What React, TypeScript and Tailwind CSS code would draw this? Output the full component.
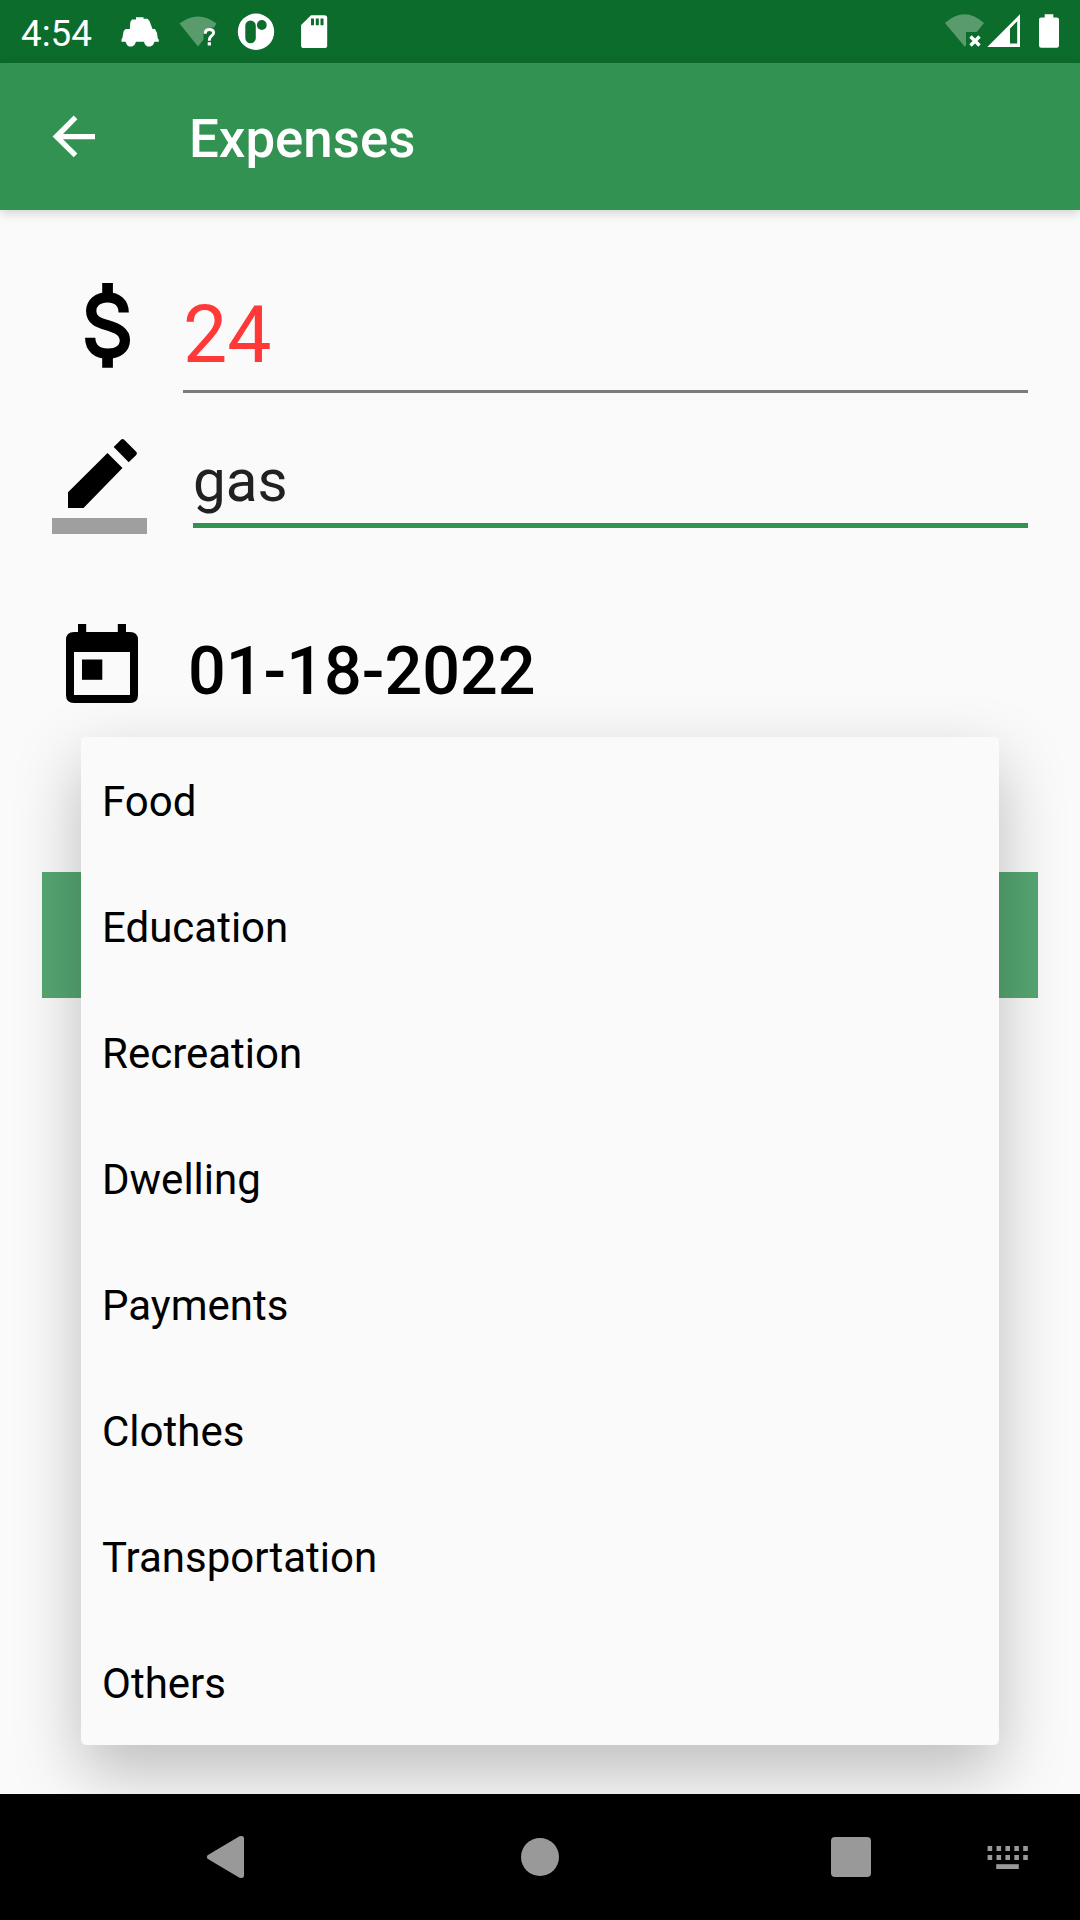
import React from "react";

const categories = [
  "Food",
  "Education",
  "Recreation",
  "Dwelling",
  "Payments",
  "Clothes",
  "Transportation",
  "Others",
];

function StatusBar() {
  return (
    <div className="flex h-[63px] items-start bg-[#0c6c2c] text-white">
      <span className="ml-[21px] mt-[12px] w-[96px] text-[36.75px] leading-[43px]">4:54</span>
      <svg className="ml-1 mt-4 h-8 w-[38px]" viewBox="121 16 38 32" fill="#fff">
        <path d="M136 17.300H143.500V18.800H147.500L149.500 21L151 25L152.500 29H155L157 33L157.800 38.500L158.800 39.500V41.800H154.500L153 45L150.500 46.600H147.500L145.300 45L143.800 41.800H136L134.500 45L132 46.600H129L127 45L125.500 41.800H121.500V39.500L122.500 37.500L123.500 31.500L125.500 29H129.800L130.300 22L132 19.500H136z" />
      </svg>
      <svg className="ml-5 mt-4 h-8 w-[40px]" viewBox="179 16 40 32">
        <path d="M179.500 23.500Q198 9.500 216.500 23.500L214 27.500Q204.500 26.500 203.500 34V39.500L198 46.500z" fill="#5a9b6e" />
        <path d="M205.300 33.800V33Q205.400 29.500 209.500 29.500T213.600 32.800Q213.600 34.500 211.500 35.900Q209.300 37.500 209.300 40.700" fill="none" stroke="#fff" strokeWidth="2.900" />
        <path d="M207.700 42.200h3.300v3.300h-3.300z" fill="#fff" />
      </svg>
      <svg className="ml-[18px] mt-[13px] h-[38px] w-[38px]" viewBox="237 13 38 38">
        <circle cx="256" cy="31.700" r="18.200" fill="#fff" />
        <rect x="245.300" y="20.500" width="10.500" height="22.700" rx="5.200" fill="#0c6c2c" />
        <circle cx="261.800" cy="25" r="4.900" fill="#0c6c2c" />
      </svg>
      <svg className="ml-[25px] mt-[15px] h-[34px] w-[28px]" viewBox="300 15 28 34">
        <path d="M311 15.200h13.500q2.700 0 2.700 2.700v27.500q0 2.600-2.700 2.600h-20.700q-2.700 0-2.700-2.600V25z" fill="#fff" />
        <path d="M311 18.500h3v6.700h-3zM315.800 18.500h3v6.700h-3zM320.500 18.500h3v6.700h-3z" fill="#0c6c2c" />
      </svg>
      <svg className="ml-[617px] mt-[13px] h-[36px] w-[40px]" viewBox="945 13 40 36">
        <path d="M945 23Q964.500 5.500 984 23L976.700 32H966V45.500L964.800 46.800z" fill="#5a9b6e" />
        <path d="M970.500 36.500l9 9M979.500 36.500l-9 9" stroke="#fff" strokeWidth="3.400" />
      </svg>
      <svg className="ml-[2px] mt-[14px] h-[34px] w-[34px]" viewBox="987 14 34 34">
        <path fillRule="evenodd" d="M987.300 47L1020 14.300V47zM1010 28.500V43.500H1017.200V21.300z" fill="#fff" />
      </svg>
      <svg className="ml-[17px] mt-[13px] h-[36px] w-[22px]" viewBox="1038 13 22 36">
        <path d="M1044.700 14.200h8.600v3.200h3.500q2.200 0 2.200 2.200v26q0 2.200-2.200 2.200h-15.600q-2.200 0-2.200-2.200v-26q0-2.200 2.200-2.200h3.500z" fill="#fff" />
      </svg>
    </div>
  );
}

function AppBar() {
  return (
    <header className="flex h-[147px] items-start bg-[#329252] text-white shadow-[0_3px_10px_rgba(0,0,0,0.16)]">
      <svg className="ml-[52px] mt-[51px] h-[44px] w-[44px]" viewBox="52 114 44 44" fill="#fff">
        <path d="M73.700 115.500l3.700 3.700L63 134h32v5.200H63l14.400 14.400-3.700 3.700L52.600 136.500z" />
      </svg>
      <h1 className="ml-[93px] mt-[45px] text-[52.8px] font-medium leading-[62px]">Expenses</h1>
    </header>
  );
}

function ExpenseForm() {
  return (
    <main className="flex h-[1584px] flex-col bg-[#fafafa]">
      <div className="flex h-[183px] items-start">
        <svg className="ml-[84px] mt-[72px] h-[88px] w-[48px]" viewBox="84 282 48 88">
          <path d="M102.200 283h10.700v13h-10.700zM102.200 355h10.700v12.700h-10.700z" fill="#000" />
          <path
            d="M123.700 312.600C123.700 303 117 297.300 107.500 297.300C97.700 297.300 91.200 303 91.200 311C91.200 320 98 322.500 107.500 325.300C118 328.500 124.900 332 124.900 340C124.900 348.500 118 353.600 107.800 353.600C97 353.600 90.200 348 90.200 337.800"
            fill="none"
            stroke="#000"
            strokeWidth="10.300"
          />
        </svg>
        <div className="ml-[51px] mt-[76px] h-[107px] w-[845px] border-b-[3px] border-[#7b7b7b] text-[78.75px] leading-[98px] text-[#ff3838]">24</div>
      </div>
      <div className="flex h-[135px] items-start">
        <div className="ml-[52px] mt-[45px] flex h-[96px] w-[95px] flex-col items-start border-b-[16px] border-[#9f9f9f]">
          <svg className="ml-[15px] mt-0 h-[72px] w-[72px]" viewBox="67 438 72 72" fill="#000">
            <path d="M68 492.300L107.500 453 122.500 468 83.500 508H68zM113.700 447l7.300-7.300q1.600-1.600 3.200 0l12 12q1.600 1.600 0 3.200l-7.500 7.300z" />
          </svg>
        </div>
        <div className="ml-[46px] mt-[58px] h-[77px] w-[835px] border-b-[5px] border-[#329252] text-[58.4px] leading-[60px] text-[#212121]">gas</div>
      </div>
      <div className="flex h-[182px] items-start">
        <svg className="ml-[65px] mt-[95px] h-[82px] w-[74px]" viewBox="65 623 74 82" fill="#000">
          <path fillRule="evenodd" d="M78 624h8.200v8h31.600v-8h8.200v8h4q8 0 8 8v55q0 8-8 8H74q-8 0-8-8v-55q0-8 8-8h4zM74 652v43h56v-43z" />
          <path d="M82 659.500h20.300v20.300H82z" />
        </svg>
        <time className="ml-[49px] mt-[105px] text-[66.5px] font-medium leading-[77px] text-black">01-18-2022</time>
      </div>
      <button aria-label="Save" className="mx-[42px] mt-[162px] h-[126px] bg-[#56a772]" />
    </main>
  );
}

function CategoryMenu() {
  return (
    <ul className="absolute left-[81px] top-[737px] w-[918px] rounded-[5px] bg-[#fafafa] shadow-[0_26px_66px_rgba(0,0,0,0.25)]">
      {categories.map((name) => (
        <li key={name} className="flex h-[126px] items-center px-[21px] pt-[3px] text-[42px] text-black">
          {name}
        </li>
      ))}
    </ul>
  );
}

function NavigationBar() {
  return (
    <nav className="relative flex h-[126px] items-center bg-black">
      <svg className="ml-[206px] h-[44px] w-[40px]" viewBox="206 1835 40 44" fill="#999">
        <path d="M207.500 1855.200L239.500 1836.300Q244 1835 244 1838.500V1875.500Q244 1879 239.500 1877.700L207.500 1858.800Q206 1857 207.500 1855.200z" />
      </svg>
      <div className="ml-[275px] h-[38px] w-[38px] rounded-full bg-[#999]" />
      <div className="ml-[272px] h-10 w-10 rounded-[4px] bg-[#999]" />
      <svg className="ml-[116px] h-[24px] w-[41px]" viewBox="987 1845 41 24" fill="#999">
        {[0, 1, 2, 3, 4].map((column) => (
          <g key={column}>
            <rect x={987.6 + column * 8.9} y="1846" width="4.600" height="5" />
            <rect x={987.6 + column * 8.9} y="1855" width="4.600" height="5" />
          </g>
        ))}
        <path d="M996.200 1864.200h22.600v4.800h-22.600z" />
      </svg>
    </nav>
  );
}

export default function App() {
  return (
    <div className="relative h-[1920px] w-[1080px] overflow-hidden font-['Roboto',sans-serif]">
      <div className="relative flex flex-col">
        <StatusBar />
        <div className="relative z-10">
          <AppBar />
        </div>
        <ExpenseForm />
      </div>
      <CategoryMenu />
      <NavigationBar />
    </div>
  );
}
